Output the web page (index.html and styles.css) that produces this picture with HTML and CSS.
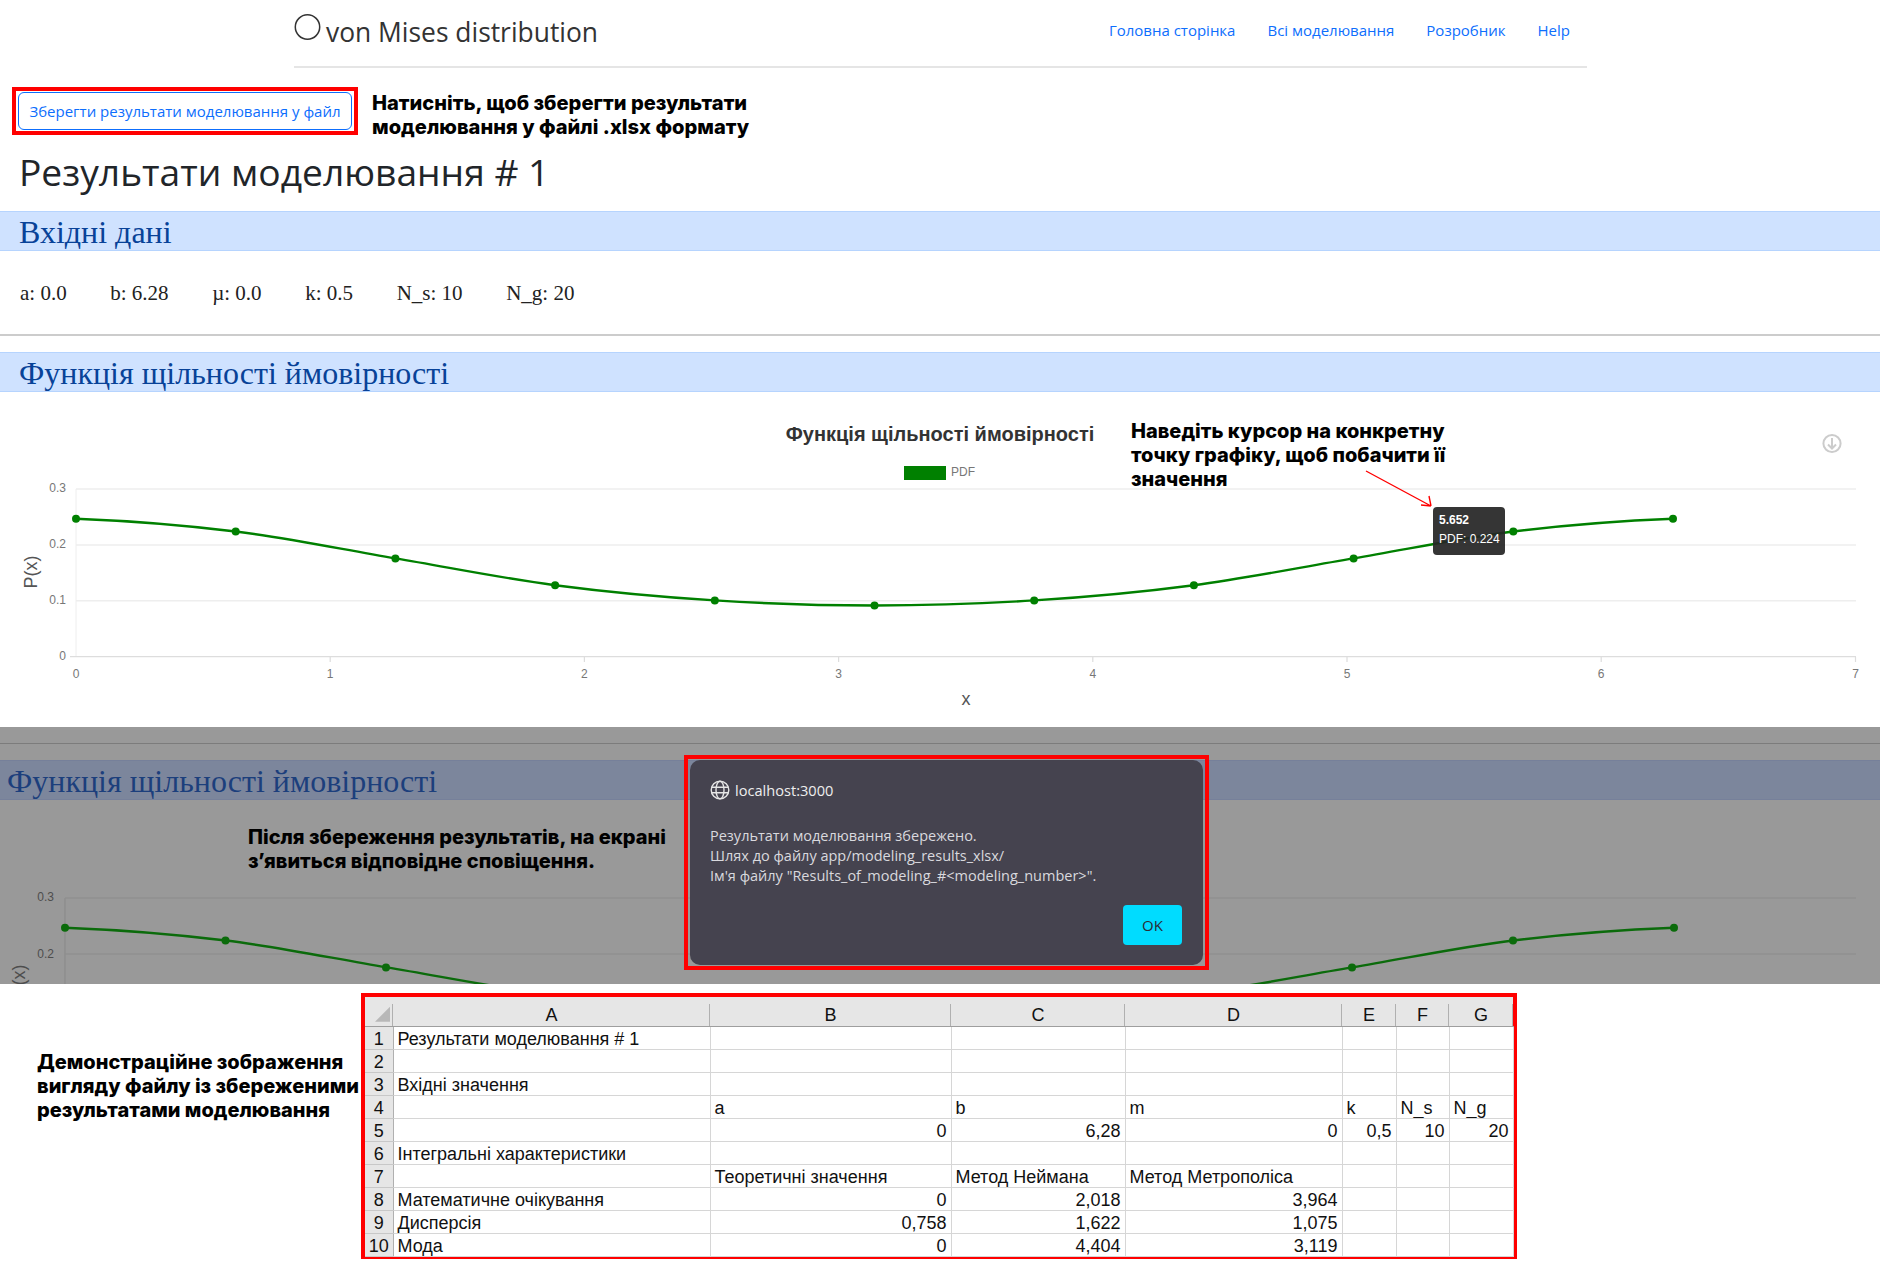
FILE: index.html
```html
<!DOCTYPE html>
<html lang="uk">
<head>
  <meta charset="UTF-8" />
  <meta name="viewport" content="width=device-width, initial-scale=1" />
  <title>Результати моделювання - von Mises distribution</title>
  <link rel="stylesheet" href="styles.css">
</head>
<body>

<header class="navbar">
  <a class="brand" href="#">
    <svg class="brand-icon" width="27" height="26" viewBox="0 0 27 26"><circle cx="13.5" cy="13" r="12.2" fill="none" stroke="#333" stroke-width="1.5"/></svg>
    <span>von Mises distribution</span>
  </a>
  <nav class="nav-links">
    <a href="#">Головна сторінка</a>
    <a href="#">Всі моделювання</a>
    <a href="#">Розробник</a>
    <a href="#">Help</a>
  </nav>
</header>

<div class="save-row">
  <div class="red-box">
    <button class="btn-save">Зберегти результати моделювання у файл</button>
  </div>
  <p class="note">Натисніть, щоб зберегти результати<br>моделювання у файлі .xlsx формату</p>
</div>

<h1 class="page-title">Результати моделювання # 1</h1>

<h2 class="band">Вхідні дані</h2>
<div class="params">
  <span>a: 0.0</span>
  <span>b: 6.28</span>
  <span>µ: 0.0</span>
  <span>k: 0.5</span>
  <span>N_s: 10</span>
  <span>N_g: 20</span>
</div>
<hr class="rule">

<h2 class="band">Функція щільності ймовірності</h2>
<section class="chart">
  <svg class="chart-svg" width="1880" height="335" viewBox="0 392 1880 335">
    <text class="chart-title" x="940" y="441">Функція щільності ймовірності</text>
    <rect x="904" y="466" width="42" height="14" fill="#008000"/>
    <text class="tick" x="951" y="476">PDF</text>

    <circle cx="1832" cy="443.5" r="8.6" fill="none" stroke="#ccc" stroke-width="2"/>
    <path d="M1832 438v10M1828 444.5l4 4 4-4" fill="none" stroke="#ccc" stroke-width="2"/>

    <path class="grid" d="M76 489H1856M76 545H1856M76 600.7H1856"/>
    <path class="grid-y" d="M76 489V657"/>
    <path class="axis" d="M70 656.7H1856M330.2 657v5M584.4 657v5M838.6 657v5M1092.8 657v5M1347 657v5M1601.2 657v5M1855.5 657v5"/>

    <g class="tick end">
      <text x="66" y="492">0.3</text>
      <text x="66" y="548">0.2</text>
      <text x="66" y="604">0.1</text>
      <text x="66" y="660">0</text>
    </g>
    <g class="tick middle">
      <text x="76" y="678">0</text>
      <text x="330" y="678">1</text>
      <text x="584.4" y="678">2</text>
      <text x="838.6" y="678">3</text>
      <text x="1092.8" y="678">4</text>
      <text x="1347" y="678">5</text>
      <text x="1601.2" y="678">6</text>
      <text x="1855.5" y="678">7</text>
    </g>
    <text class="axis-label" x="966" y="705">x</text>
    <text class="axis-label" transform="translate(37 572) rotate(-90)">P(x)</text>

    <path class="curve" d="M76 518.7C129.2 520.8 182.5 524.9 235.7 531.5C288.9 538.1 342.2 549.5 395.4 558.4C448.6 567.3 501.9 578.2 555.1 585.2C608.3 592.2 661.6 597 714.8 600.4C768 603.8 821.3 605.5 874.5 605.5C927.7 605.5 981 603.8 1034.2 600.4C1087.4 597 1140.7 592.2 1193.9 585.2C1247.1 578.2 1300.4 567.3 1353.6 558.4C1406.8 549.5 1460.1 538.1 1513.3 531.5C1566.5 524.9 1619.8 520.8 1673 518.7"/>
    <g fill="#008000">
      <circle cx="76" cy="518.7" r="4"/>
      <circle cx="235.7" cy="531.5" r="4"/>
      <circle cx="395.4" cy="558.4" r="4"/>
      <circle cx="555.1" cy="585.2" r="4"/>
      <circle cx="714.8" cy="600.4" r="4"/>
      <circle cx="874.5" cy="605.5" r="4"/>
      <circle cx="1034.2" cy="600.4" r="4"/>
      <circle cx="1193.9" cy="585.2" r="4"/>
      <circle cx="1353.6" cy="558.4" r="4"/>
      <circle cx="1513.3" cy="531.5" r="4"/>
      <circle cx="1673" cy="518.7" r="4"/>
    </g>

    <path d="M1366 471L1431 506M1431 506l-10-1M1431 506l-2-10" fill="none" stroke="#f00" stroke-width="1.4"/>
  </svg>
  <p class="note chart-note">Наведіть курсор на конкретну<br>точку графіку, щоб побачити її<br>значення</p>
  <div class="tooltip">
    <b>5.652</b>
    <span>PDF: 0.224</span>
  </div>
</section>

<section class="dimmed">
  <hr class="dim-rule">
  <h2 class="band dim-band">Функція щільності ймовірності</h2>
  <svg class="dim-svg" width="1880" height="184" viewBox="0 800 1880 184">
    <path class="dim-grid" d="M65 898H1856M65 954H1856M65 898V984"/>
    <g class="tick end dim-tick">
      <text x="54" y="901">0.3</text>
      <text x="54" y="958">0.2</text>
    </g>
    <text class="axis-label dim-tick" transform="translate(25 981) rotate(-90)">P(x)</text>
    <path class="curve dim-curve" transform="translate(65 409) scale(1.0075 1) translate(-76 0)" d="M76 518.7C129.2 520.8 182.5 524.9 235.7 531.5C288.9 538.1 342.2 549.5 395.4 558.4C448.6 567.3 501.9 578.2 555.1 585.2C608.3 592.2 661.6 597 714.8 600.4C768 603.8 821.3 605.5 874.5 605.5C927.7 605.5 981 603.8 1034.2 600.4C1087.4 597 1140.7 592.2 1193.9 585.2C1247.1 578.2 1300.4 567.3 1353.6 558.4C1406.8 549.5 1460.1 538.1 1513.3 531.5C1566.5 524.9 1619.8 520.8 1673 518.7"/>
    <g fill="#0b6b0b">
      <circle cx="65" cy="927.7" r="4"/>
      <circle cx="225.5" cy="940.6" r="4"/>
      <circle cx="386" cy="967.6" r="4"/>
      <circle cx="1352" cy="967.6" r="4"/>
      <circle cx="1513" cy="940.6" r="4"/>
      <circle cx="1674" cy="927.7" r="4"/>
    </g>
  </svg>
  <p class="note dim-note">Після збереження результатів, на екрані<br>з’явиться відповідне сповіщення.</p>

  <div class="dialog-frame">
    <div class="dialog">
      <div class="dialog-head">
        <svg width="20" height="20" viewBox="0 0 20 20" fill="none" stroke="#e6e6e6" stroke-width="1.4"><circle cx="10" cy="10" r="8.8"/><ellipse cx="10" cy="10" rx="4" ry="8.8"/><path d="M1.4 7.2H18.6M1.4 12.8H18.6"/></svg>
        <span>localhost:3000</span>
      </div>
      <p class="dialog-text">Результати моделювання збережено.<br>Шлях до файлу app/modeling_results_xlsx/<br>Ім'я файлу "Results_of_modeling_#&lt;modeling_number&gt;".</p>
      <div class="dialog-foot"><button class="btn-ok">OK</button></div>
    </div>
  </div>
</section>

<section class="sheet-row">
  <p class="note sheet-note">Демонстраційне зображення<br>вигляду файлу із збереженими<br>результатами моделювання</p>
  <div class="sheet-frame">
    <table class="sheet">
      <colgroup>
        <col class="c-head"><col class="c-a"><col class="c-b"><col class="c-c"><col class="c-d"><col class="c-e"><col class="c-f"><col class="c-g">
      </colgroup>
      <thead>
        <tr><th class="corner"><i></i></th><th>A</th><th>B</th><th>C</th><th>D</th><th>E</th><th>F</th><th>G</th></tr>
      </thead>
      <tbody>
        <tr><th>1</th><td>Результати моделювання # 1</td><td></td><td></td><td></td><td></td><td></td><td></td></tr>
        <tr><th>2</th><td></td><td></td><td></td><td></td><td></td><td></td><td></td></tr>
        <tr><th>3</th><td>Вхідні значення</td><td></td><td></td><td></td><td></td><td></td><td></td></tr>
        <tr><th>4</th><td></td><td>a</td><td>b</td><td>m</td><td>k</td><td>N_s</td><td>N_g</td></tr>
        <tr><th>5</th><td></td><td class="num">0</td><td class="num">6,28</td><td class="num">0</td><td class="num">0,5</td><td class="num">10</td><td class="num">20</td></tr>
        <tr><th>6</th><td>Інтегральні характеристики</td><td></td><td></td><td></td><td></td><td></td><td></td></tr>
        <tr><th>7</th><td></td><td>Теоретичні значення</td><td>Метод Неймана</td><td>Метод Метрополіса</td><td></td><td></td><td></td></tr>
        <tr><th>8</th><td>Математичне очікування</td><td class="num">0</td><td class="num">2,018</td><td class="num">3,964</td><td></td><td></td><td></td></tr>
        <tr><th>9</th><td>Дисперсія</td><td class="num">0,758</td><td class="num">1,622</td><td class="num">1,075</td><td></td><td></td><td></td></tr>
        <tr><th>10</th><td>Мода</td><td class="num">0</td><td class="num">4,404</td><td class="num">3,119</td><td></td><td></td><td></td></tr>
      </tbody>
    </table>
  </div>
</section>

</body>
</html>
```
FILE: styles.css
```css
* {
  box-sizing: border-box;
}
body {
  margin: 0;
  width: 1880px;
  height: 1265px;
  overflow: hidden;
  background: #fff;
  color: #212529;
  font-family: "Open Sans", sans-serif;
}
a {
  text-decoration: none;
}

/* top bar */
.navbar {
  display: flex;
  justify-content: space-between;
  width: 1293px;
  height: 68px;
  margin-left: 294px;
  border-bottom: 2px solid #e5e5e5;
}
.brand {
  display: flex;
  gap: 5px;
  color: #333;
  font-size: 26.4px;
  height: 52px;
  padding-top: 14px;
}
.brand span {
  line-height: 36px;
}
.brand-icon {
  flex: none;
}
.nav-links {
  display: flex;
  gap: 32px;
  padding: 20px 17px 0 0;
  font-size: 15px;
  line-height: 21px;
}
.nav-links a {
  color: #0d6efd;
}

/* save button and notes */
.save-row {
  display: flex;
  gap: 14px;
  height: 48px;
  margin: 19px 0 0 12px;
}
.red-box {
  width: 346px;
  height: 48px;
  padding: 1px 2px;
  border: 4px solid #f00;
}
.btn-save {
  display: block;
  width: 100%;
  height: 100%;
  padding: 0;
  border: 1px solid #0d6efd;
  border-radius: 6px;
  background: #fff;
  color: #0d6efd;
  font-family: "Open Sans", sans-serif;
  font-size: 15px;
}
.note {
  margin: 0;
  color: #000;
  font-family: Inter, sans-serif;
  font-size: 20px;
  font-weight: 800;
  line-height: 24px;
}
.save-row .note {
  padding-top: 4px;
  font-size: 20.1px;
}

.page-title {
  margin: 9px 0 0 19px;
  height: 67px;
  font-size: 37.2px;
  font-weight: 400;
  line-height: 56px;
}

/* section bands */
.band {
  height: 40px;
  margin: 0;
  padding-left: 19px;
  background: #cfe2ff;
  border-top: 1px solid #b6d4fe;
  border-bottom: 1px solid #b6d4fe;
  color: #084298;
  font-family: "Liberation Serif", serif;
  font-size: 32px;
  font-weight: 400;
  line-height: 40px;
}
.params {
  display: flex;
  gap: 43.6px;
  height: 83px;
  padding: 29px 0 0 20px;
  color: #222;
  font-family: "Liberation Serif", serif;
  font-size: 21px;
  line-height: 26px;
}
.rule {
  height: 2px;
  margin: 0 0 16px;
  border: 0;
  background: #ccc;
}

/* chart */
.chart {
  position: relative;
  height: 335px;
}
.chart-svg,
.dim-svg {
  display: block;
}
.chart-title {
  fill: #333;
  font-family: "Liberation Sans", sans-serif;
  font-size: 20px;
  font-weight: 700;
  text-anchor: middle;
}
.tick {
  fill: #777;
  font-family: "Liberation Sans", sans-serif;
  font-size: 12px;
}
.end {
  text-anchor: end;
}
.middle {
  text-anchor: middle;
}
.axis-label {
  fill: #555;
  font-family: "Liberation Sans", sans-serif;
  font-size: 18px;
  text-anchor: middle;
}
.grid {
  fill: none;
  stroke: #eee;
  stroke-width: 1.4;
}
.grid-y {
  fill: none;
  stroke: #eee;
}
.axis {
  fill: none;
  stroke: #ddd;
  stroke-width: 1.2;
}
.curve {
  fill: none;
  stroke: #008000;
  stroke-width: 2.4;
}
.chart-note {
  position: absolute;
  left: 1131px;
  top: 27px;
}
.tooltip {
  position: absolute;
  left: 1433px;
  top: 115px;
  display: flex;
  flex-direction: column;
  gap: 4px;
  width: 72px;
  height: 48px;
  padding: 6px 0 0 6px;
  border-radius: 4px;
  background: rgba(38, 38, 38, 0.93);
  color: #fff;
  font-family: "Liberation Sans", sans-serif;
  font-size: 12px;
  line-height: 15px;
}

/* dimmed screenshot with the alert */
.dimmed {
  position: relative;
  height: 257px;
  overflow: hidden;
  background: #999;
}
.dim-rule {
  height: 1px;
  margin: 16px 0 16px;
  border: 0;
  background: #7c7c7c;
}
.dim-band {
  padding-left: 7px;
  background: #7c869c;
  border-color: #76809a;
  color: #1c3f7c;
}
.dim-grid {
  fill: none;
  stroke: #8c8c8c;
  stroke-width: 1.2;
}
.tick.dim-tick {
  fill: #4d4d4d;
}
.axis-label.dim-tick {
  fill: #4d4d4d;
}
.dim-curve {
  stroke: #0b6b0b;
}
.dim-note {
  position: absolute;
  left: 248px;
  top: 98px;
}
.dialog-frame {
  position: absolute;
  left: 684px;
  top: 28px;
  width: 525px;
  height: 215px;
  padding: 1px 2px;
  border: 4px solid #f00;
}
.dialog {
  height: 100%;
  padding: 20px 21px 0 20px;
  border-radius: 10px;
  background: #45434f;
  color: #d9d9de;
  font-family: "Open Sans", sans-serif;
  font-size: 14.5px;
  line-height: 20px;
}
.dialog-head {
  display: flex;
  align-items: center;
  gap: 5px;
  color: #eee;
  font-size: 14.6px;
}
.dialog-text {
  margin: 26px 0 0;
}
.dialog-foot {
  display: flex;
  justify-content: flex-end;
  margin-top: 19px;
}
.btn-ok {
  width: 59px;
  height: 40px;
  border: 0;
  border-radius: 4px;
  background: #00dcff;
  color: #2b2b33;
  font-family: "Open Sans", sans-serif;
  font-size: 15px;
}

/* spreadsheet */
.sheet-row {
  display: flex;
  padding: 9px 0 0 37px;
}
.sheet-note {
  width: 324px;
  padding-top: 57px;
}
.sheet-frame {
  width: 1156px;
  height: 266px;
  border: 4px solid #f00;
  border-bottom-width: 3px;
}
.sheet {
  border-collapse: collapse;
  table-layout: fixed;
  width: 1148px;
  color: #111;
  font-family: "Liberation Sans", sans-serif;
  font-size: 18px;
  line-height: 20px;
}
.c-head { width: 28px; }
.c-a { width: 317px; }
.c-b { width: 241px; }
.c-c { width: 174px; }
.c-d { width: 217px; }
.c-e { width: 54px; }
.c-f { width: 53px; }
.c-g { width: 64px; }
.sheet thead tr {
  height: 29px;
}
.sheet tbody tr {
  height: 23px;
}
.sheet th {
  padding: 2px 0 0;
  background: #e6e6e6;
  font-weight: 400;
  font-size: 18px;
  text-align: center;
}
.sheet thead th {
  padding-top: 8px;
  border-bottom: 1px solid #9e9e9e;
  background: linear-gradient(#b0b0b0, #b0b0b0) right bottom / 1px 22px no-repeat, #e6e6e6;
}
.sheet tbody th {
  border-bottom: 1px solid #c8c8c8;
  border-right: 1px solid #b0b0b0;
}
.sheet td {
  padding: 2px 4px 0;
  border-right: 1px solid #d6d6d6;
  border-bottom: 1px solid #d6d6d6;
  white-space: nowrap;
  overflow: hidden;
}
.sheet .num {
  text-align: right;
}
.sheet thead .corner {
  padding-top: 6px;
}
.corner i {
  display: block;
  width: 15px;
  height: 15px;
  margin: 0 0 0 10px;
  background: #b8b8b8;
  clip-path: polygon(100% 0, 100% 100%, 0 100%);
}
```
